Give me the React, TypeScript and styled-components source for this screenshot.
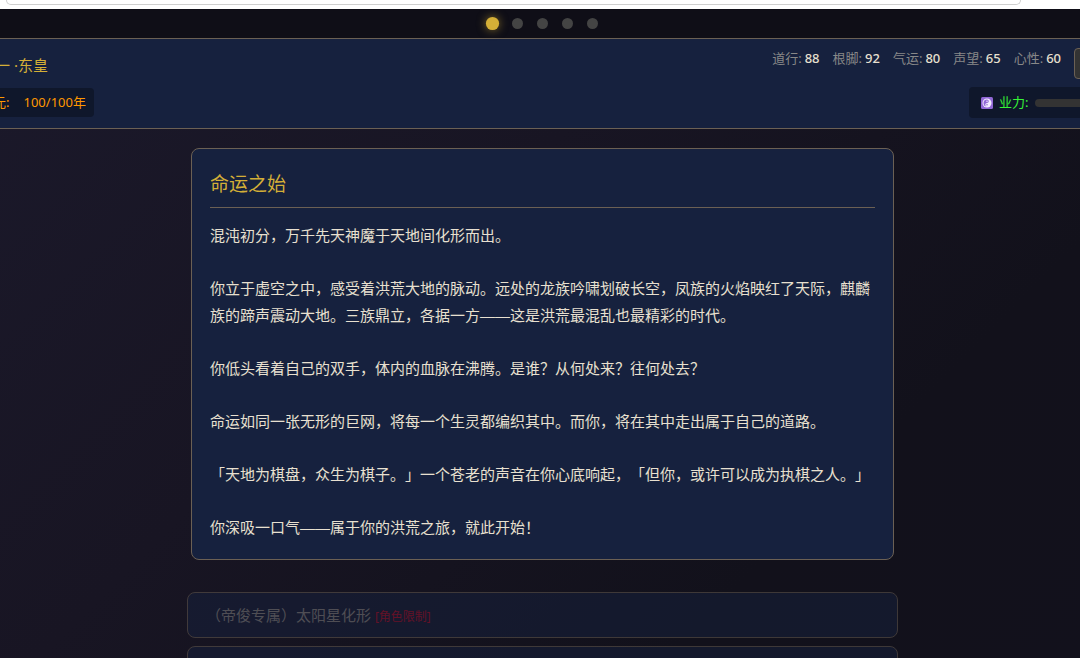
import React from 'react';
import styled, { createGlobalStyle } from 'styled-components';

const color = {
  gold: '#d4af37',
  panel: '#16213e',
  line: '#6b6054',
  text: '#e8e0d0',
  muted: '#888888',
  well: '#0f172b',
};

const GlobalStyle = createGlobalStyle`
  *, *::before, *::after { box-sizing: border-box; }
  body {
    margin: 0;
    overflow: hidden;
    background: #12111c;
    color: ${color.text};
    font-family: "Noto Sans", "Noto Sans CJK SC", sans-serif;
    text-spacing-trim: space-all;
  }
  h1, h2, p, dl, dd, dt, ol, ul { margin: 0; padding: 0; font-weight: 400; list-style: none; }
  button { font: inherit; }
`;

const Page = styled.div`
  display: flex;
  flex-direction: column;
  height: 100vh;
  overflow: hidden;
`;

const BrowserStrip = styled.div`
  flex: none;
  height: 9px;
  padding: 0 59px 0 6px;
  background: #ffffff;
  overflow: hidden;
`;

const AddressEdge = styled.div`
  height: 5px;
  border: 1px solid #cfcfcf;
  border-top: 0;
  border-radius: 0 0 14px 14px;
`;

/* The game surface is wider than the window and runs past both of its edges. */
const Game = styled.div`
  flex: 1;
  display: flex;
  flex-direction: column;
  margin: 0 -36px 0 -31px;
  min-height: 0;
  background: linear-gradient(135deg, #1b192b 0%, #181523 40%, #12111b 75%, #12111c 100%);
`;

const Steps = styled.ol`
  flex: none;
  display: flex;
  justify-content: center;
  align-items: center;
  gap: 14px;
  height: 29px;
  background: #0f0e17;
`;

const Step = styled.li<{ $active?: boolean }>`
  width: 11px;
  height: 11px;
  border-radius: 50%;
  background: ${(p) => (p.$active ? color.gold : '#444444')};
  transform: ${(p) => (p.$active ? 'scale(1.2)' : 'none')};
  box-shadow: ${(p) => (p.$active ? `0 0 8px rgba(212, 175, 55, 0.6)` : 'none')};
`;

const Header = styled.header`
  flex: none;
  display: flex;
  flex-direction: column;
  gap: 8px;
  padding: 9px 16px 10px;
  background: ${color.panel};
  border: 1px solid ${color.line};
  border-width: 1px 0;
`;

const HeaderRow = styled.div`
  display: flex;
  align-items: center;
  justify-content: space-between;
  height: 31px;
`;

const PlayerName = styled.h1`
  padding: 2px 0 0 10px;
  font-size: 15px;
  line-height: 30px;
  color: ${color.gold};
`;

const HeaderTools = styled.div`
  display: flex;
  align-items: flex-start;
  gap: 13px;
`;

const Stats = styled.dl`
  display: flex;
  gap: 13px;
  font-size: 13px;
  line-height: 20px;
`;

const Stat = styled.div`
  display: flex;
  gap: 3px;
`;

const StatName = styled.dt`
  color: ${color.muted};
`;

const StatValue = styled.dd`
  color: ${color.text};
  font-weight: 500;
`;

const MenuButton = styled.button`
  width: 26px;
  height: 31px;
  padding: 0;
  border: 1px solid ${color.line};
  border-radius: 4px;
  background: #333333;
`;

const Lifespan = styled.div`
  display: flex;
  gap: 14px;
  padding: 0 8px;
  border-radius: 4px;
  background: ${color.well};
  font-size: 13px;
  line-height: 29px;
  color: #ff9800;
`;

const Karma = styled.div`
  display: flex;
  align-items: center;
  width: 131px;
  padding: 0 12px;
  border-radius: 4px;
  background: ${color.well};
  font-size: 13px;
  line-height: 31px;
  color: #36f636;
`;

const KarmaLabel = styled.span`
  margin: 0 7px 0 6px;
`;

const KarmaTrack = styled.div`
  flex: 1;
  height: 8px;
  border-radius: 4px;
  background: #333333;
`;

const Main = styled.main`
  display: flex;
  flex-direction: column;
  align-items: center;
  gap: 32px;
  padding: 19px 36px 0;
`;

const Story = styled.article`
  width: 100%;
  max-width: 703px;
  padding: 18px;
  border: 1px solid ${color.line};
  border-radius: 8px;
  background: ${color.panel};
`;

const StoryTitle = styled.h2`
  margin-bottom: 14px;
  padding-bottom: 6px;
  border-bottom: 1px solid ${color.line};
  font-size: 19px;
  line-height: 34px;
  color: ${color.gold};
`;

const StoryText = styled.div`
  display: flex;
  flex-direction: column;
  gap: 26px;
  font-family: "Liberation Sans", "Noto Sans CJK SC", sans-serif;
  font-size: 15px;
  line-height: 27px;
`;

const Choices = styled.div`
  display: flex;
  flex-direction: column;
  gap: 8px;
  width: 100%;
  max-width: 711px;
`;

const Choice = styled.button`
  height: 46px;
  padding: 2px 18px 0;
  border: 1px solid ${color.line};
  border-radius: 8px;
  background: ${color.panel};
  color: ${color.muted};
  font-size: 15px;
  line-height: 24px;
  text-align: left;
  &:disabled { opacity: 0.5; }
`;

const Restriction = styled.span`
  font-size: 12px;
  color: #b01030;
`;

const stats: [string, number][] = [
  ['道行', 88],
  ['根脚', 92],
  ['气运', 80],
  ['声望', 65],
  ['心性', 60],
];

const paragraphs = [
  '混沌初分，万千先天神魔于天地间化形而出。',
  '你立于虚空之中，感受着洪荒大地的脉动。远处的龙族吟啸划破长空，凤族的火焰映红了天际，麒麟族的蹄声震动大地。三族鼎立，各据一方——这是洪荒最混乱也最精彩的时代。',
  '你低头看着自己的双手，体内的血脉在沸腾。是谁？从何处来？往何处去？',
  '命运如同一张无形的巨网，将每一个生灵都编织其中。而你，将在其中走出属于自己的道路。',
  '「天地为棋盘，众生为棋子。」一个苍老的声音在你心底响起，「但你，或许可以成为执棋之人。」',
  '你深吸一口气——属于你的洪荒之旅，就此开始！',
];

const YinYang = () => (
  <svg width="12" height="12" viewBox="0 0 24 24" aria-hidden="true">
    <rect width="24" height="24" rx="3" fill="#9168d6" />
    <circle cx="12" cy="12" r="9" fill="#f3ecff" />
    <path
      d="M12 5a3.5 3.5 0 0 1 0 7a3.5 3.5 0 0 0 0 7a7 7 0 0 1 0-14z"
      fill="#9168d6"
    />
    <circle cx="12" cy="8.5" r="1.5" fill="#f3ecff" />
    <circle cx="12" cy="15.5" r="1.5" fill="#9168d6" />
  </svg>
);

export default function App() {
  return (
    <Page lang="zh-CN">
      <GlobalStyle />
      <BrowserStrip>
        <AddressEdge />
      </BrowserStrip>
      <Game>
        <Steps>
          {[0, 1, 2, 3, 4].map((i) => (
            <Step key={i} $active={i === 0} />
          ))}
        </Steps>
        <Header>
          <HeaderRow>
            <PlayerName>一 ·东皇</PlayerName>
            <HeaderTools>
              <Stats>
                {stats.map(([name, value]) => (
                  <Stat key={name}>
                    <StatName>{name}:</StatName>
                    <StatValue>{value}</StatValue>
                  </Stat>
                ))}
              </Stats>
              <MenuButton type="button" aria-label="菜单" />
            </HeaderTools>
          </HeaderRow>
          <HeaderRow>
            <Lifespan>
              <span>元:</span>
              <span>100/100年</span>
            </Lifespan>
            <Karma>
              <YinYang />
              <KarmaLabel>业力:</KarmaLabel>
              <KarmaTrack />
            </Karma>
          </HeaderRow>
        </Header>
        <Main>
          <Story>
            <StoryTitle>命运之始</StoryTitle>
            <StoryText>
              {paragraphs.map((text) => (
                <p key={text}>{text}</p>
              ))}
            </StoryText>
          </Story>
          <Choices>
            <Choice type="button" disabled>
              （帝俊专属）太阳星化形 <Restriction>[角色限制]</Restriction>
            </Choice>
            <Choice type="button" disabled aria-label="选项二" />
          </Choices>
        </Main>
      </Game>
    </Page>
  );
}
